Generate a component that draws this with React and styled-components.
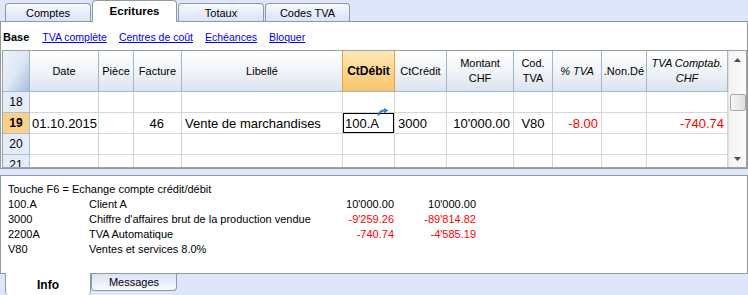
import React from 'react';
import styled, { createGlobalStyle } from 'styled-components';

const GlobalStyle = createGlobalStyle`
  * { box-sizing: border-box; }
  body {
    margin: 0;
    background: #dfe6fb;
    font-family: "Liberation Sans", Arial, sans-serif;
    font-size: 11px;
    color: #000;
  }
`;

const Page = styled.div`
  width: 748px;
  height: 295px;
  display: flex;
  flex-direction: column;
  overflow: hidden;
`;

const TabStrip = styled.div`
  height: 23px;
  margin-bottom: -1px;
  padding-left: 5px;
  display: flex;
  align-items: flex-end;
  gap: 1px;
  position: relative;
  z-index: 1;
`;

const Tab = styled.div`
  width: ${(p) => p.$w}px;
  height: ${(p) => (p.$active ? 22 : 18)}px;
  margin-bottom: ${(p) => (p.$active ? 0 : 1)}px;
  border: 1px solid #919b9c;
  border-bottom: none;
  border-radius: 4px 4px 0 0;
  background: ${(p) =>
    p.$active ? '#fff' : 'linear-gradient(to bottom, #fbfcfe 0%, #eaeefb 45%, #dce3f7 100%)'};
  font-weight: ${(p) => (p.$active ? 'bold' : 'normal')};
  font-size: ${(p) => (p.$active ? 11.5 : 11)}px;
  display: flex;
  align-items: center;
  justify-content: center;
  padding-bottom: ${(p) => (p.$active ? 2 : 0)}px;
`;

const Panel = styled.div`
  height: 148px;
  flex: none;
  background: #fff;
  border: 1px solid #919b9c;
  display: flex;
  flex-direction: column;
`;

const LinkBar = styled.div`
  height: 28px;
  flex: none;
  display: flex;
  align-items: center;
  padding: 2px 0 0 2px;
  gap: 12px;
`;

const Base = styled.span`
  font-weight: bold;
  font-size: 11px;
  margin-right: 1px;
`;

const Link = styled.a`
  color: #0000ff;
  font-size: 10.5px;
  text-decoration: underline;
  cursor: pointer;
`;

const Grid = styled.div`
  margin-left: 1px;
  width: 745px;
  height: 118px;
  flex: none;
  border: 1px solid #a0a0a0;
  display: flex;
`;

const Table = styled.div`
  width: 725px;
  height: 116px;
  overflow: hidden;
  display: flex;
  flex-direction: column;
`;

const HeadRow = styled.div`
  height: 41px;
  flex: none;
  display: flex;
  border-bottom: 1px solid #a6b8cf;
`;

const HeadCell = styled.div`
  flex: none;
  display: flex;
  align-items: center;
  justify-content: center;
  text-align: center;
  line-height: 15px;
  white-space: pre;
  overflow: hidden;
  border-right: 1px solid ${(p) => (p.$hot ? '#f0a035' : '#9fb6cf')};
  border-left: ${(p) => (p.$hot ? '1px solid #f0a035' : 'none')};
  margin-left: ${(p) => (p.$hot ? -1 : 0)}px;
  width: ${(p) => (p.$hot ? p.$w + 1 : p.$w)}px;
  font-weight: ${(p) => (p.$hot ? 'bold' : 'normal')};
  font-style: ${(p) => (p.$italic ? 'italic' : 'normal')};
  font-size: ${(p) => (p.$hot ? 12 : 11)}px;
  background: ${(p) =>
    p.$hot
      ? 'linear-gradient(to bottom, #fde9b6 0%, #fbd58c 55%, #f7c469 100%)'
      : 'linear-gradient(to bottom, #ffffff 0%, #f1f4f9 50%, #dbe3ee 100%)'};
`;

const Corner = styled.div`
  width: 27px;
  flex: none;
  border-right: 1px solid #9fb6cf;
  background: linear-gradient(to bottom right, #edf2fc 0%, #dfe8f7 50%, #a8bedb 100%);
`;

const Row = styled.div`
  height: 21px;
  flex: none;
  display: flex;
  border-bottom: 1px solid #d6d6d6;
`;

const NumCell = styled.div`
  width: 27px;
  flex: none;
  display: flex;
  align-items: center;
  justify-content: center;
  font-size: 12px;
  font-weight: ${(p) => (p.$on ? 'bold' : 'normal')};
  background: ${(p) => (p.$on ? '#fcd088' : '#e4ecf7')};
  border-right: 1px solid #a8bfd8;
  border-bottom: 1px solid #a8bfd8;
  margin-bottom: -1px;
`;

const Cell = styled.div`
  width: ${(p) => p.$w}px;
  flex: none;
  position: relative;
  display: flex;
  align-items: center;
  justify-content: ${(p) =>
    p.$align === 'right' ? 'flex-end' : p.$align === 'center' ? 'center' : 'flex-start'};
  padding: ${(p) => (p.$align === 'right' ? `0 ${p.$pad ?? 3}px 0 0` : `0 0 0 ${p.$pad ?? 3}px`)};
  font-size: 13px;
  color: ${(p) => (p.$red ? '#ff0000' : '#000')};
  white-space: nowrap;
  border-right: 1px solid #d6d6d6;
  box-shadow: ${(p) => (p.$sel ? 'inset 0 0 0 1px #000' : 'none')};
`;

const ArrowMark = styled.svg`
  position: absolute;
  right: 5px;
  top: -5px;
`;

const Scrollbar = styled.div`
  width: 18px;
  height: 116px;
  border-left: 1px solid #e2e2e2;
  background: linear-gradient(to right, #f4f4f4, #fbfbfb);
  display: flex;
  flex-direction: column;
  align-items: center;
`;

const ScrollBtn = styled.div`
  height: 17px;
  width: 100%;
  display: flex;
  align-items: center;
  justify-content: center;
`;

const Thumb = styled.div`
  margin-top: 26px;
  width: 16px;
  height: 17px;
  border: 1px solid #a9a9a9;
  border-radius: 2px;
  background: linear-gradient(to right, #f6f6f6, #dedede);
`;

const Spacer = styled.div`
  flex: 1;
`;

const InfoPanel = styled.div`
  margin-top: 6px;
  height: 99px;
  flex: none;
  background: #fff;
  border: 1px solid #919b9c;
  padding: 6px 0 0 7px;
  display: grid;
  grid-template-columns: 81px 225px 80px 82px;
  grid-auto-rows: 15px;
  align-content: start;
  line-height: 15px;
`;

const InfoWide = styled.div`
  grid-column: 1 / -1;
`;

const Amount = styled.div`
  text-align: right;
  color: ${(p) => (p.$red ? '#ff0000' : '#000')};
`;

const BottomStrip = styled.div`
  height: 22px;
  margin-top: -1px;
  padding-left: 5px;
  display: flex;
  align-items: flex-start;
  position: relative;
  z-index: 1;
`;

const BottomTab = styled.div`
  width: 86px;
  height: ${(p) => (p.$active ? 22 : 17)}px;
  margin-top: ${(p) => (p.$active ? 0 : 1)}px;
  border: 1px solid #919b9c;
  border-top: none;
  border-bottom: ${(p) => (p.$active ? 'none' : '1px solid #919b9c')};
  border-radius: 0 0 4px 4px;
  background: ${(p) =>
    p.$active ? '#fff' : 'linear-gradient(to bottom, #dce3f7 0%, #eaeefb 55%, #fbfcfe 100%)'};
  font-weight: ${(p) => (p.$active ? 'bold' : 'normal')};
  font-size: ${(p) => (p.$active ? 12 : 11)}px;
  display: flex;
  align-items: center;
  justify-content: center;
  padding-top: ${(p) => (p.$active ? 1 : 0)}px;
  padding-bottom: ${(p) => (p.$active ? 0 : 1)}px;
`;

const widths = [69, 35, 48, 161, 52, 52, 67, 39, 49, 45, 81];

const headers = [
  { label: 'Date' },
  { label: 'Pièce' },
  { label: 'Facture' },
  { label: 'Libellé' },
  { label: 'CtDébit', hot: true },
  { label: 'CtCrédit' },
  { label: 'Montant\nCHF' },
  { label: 'Cod.\nTVA' },
  { label: '% TVA', italic: true },
  { label: '.Non.Dé' },
  { label: 'TVA Comptab.\nCHF', italic: true },
];

const rowCells = [
  { text: '01.10.2015', align: 'left', pad: 2 },
  { text: '' },
  { text: '46', align: 'right', pad: 17 },
  { text: 'Vente de marchandises', align: 'left', pad: 3 },
  { text: '100.A', align: 'left', pad: 2, sel: true },
  { text: '3000', align: 'left', pad: 3 },
  { text: "10'000.00", align: 'right' },
  { text: 'V80', align: 'center', pad: 0 },
  { text: '-8.00', align: 'right', red: true },
  { text: '' },
  { text: '-740.74', align: 'right', red: true },
];

const info = [
  ['100.A', 'Client A', "10'000.00", "10'000.00", false],
  ['3000', "Chiffre d'affaires brut de la production vendue", "-9'259.26", "-89'814.82", true],
  ['2200A', 'TVA Automatique', '-740.74', "-4'585.19", true],
  ['V80', 'Ventes et services 8.0%', '', '', false],
];

const EmptyRow = ({ n }) => (
  <Row>
    <NumCell>{n}</NumCell>
    {widths.map((w, i) => (
      <Cell key={i} $w={w} />
    ))}
  </Row>
);

const App = () => (
  <>
    <GlobalStyle />
    <Page>
      <TabStrip>
        <Tab $w={86}>Comptes</Tab>
        <Tab $w={85} $active>Ecritures</Tab>
        <Tab $w={86}>Totaux</Tab>
        <Tab $w={85}>Codes TVA</Tab>
      </TabStrip>

      <Panel>
        <LinkBar>
          <Base>Base</Base>
          <Link>TVA complète</Link>
          <Link>Centres de coût</Link>
          <Link>Echéances</Link>
          <Link>Bloquer</Link>
        </LinkBar>

        <Grid>
          <Table>
            <HeadRow>
              <Corner />
              {headers.map((h, i) => (
                <HeadCell key={i} $w={widths[i]} $hot={h.hot} $italic={h.italic}>
                  {h.label}
                </HeadCell>
              ))}
            </HeadRow>
            <EmptyRow n="18" />
            <Row>
              <NumCell $on>19</NumCell>
              {rowCells.map((c, i) => (
                <Cell
                  key={i}
                  $w={widths[i]}
                  $align={c.align}
                  $pad={c.pad}
                  $red={c.red}
                  $sel={c.sel}
                >
                  {c.text}
                  {c.sel && (
                    <ArrowMark width="12" height="8" viewBox="0 0 12 8">
                      <path d="M1.5 7.5 Q2.5 2.5 7.5 2.5" fill="none" stroke="#2b7bd0" strokeWidth="2" />
                      <polygon points="7,0 11.5,2.6 7,5.2" fill="#2b7bd0" />
                    </ArrowMark>
                  )}
                </Cell>
              ))}
            </Row>
            <EmptyRow n="20" />
            <EmptyRow n="21" />
          </Table>
          <Scrollbar>
            <ScrollBtn>
              <svg width="7" height="4" viewBox="0 0 7 4">
                <polygon points="0,4 3.5,0 7,4" fill="#4d4d4d" />
              </svg>
            </ScrollBtn>
            <Thumb />
            <Spacer />
            <ScrollBtn>
              <svg width="7" height="4" viewBox="0 0 7 4">
                <polygon points="0,0 7,0 3.5,4" fill="#4d4d4d" />
              </svg>
            </ScrollBtn>
          </Scrollbar>
        </Grid>
      </Panel>

      <InfoPanel>
        <InfoWide>Touche F6 = Echange compte crédit/débit</InfoWide>
        {info.map(([code, label, a, b, red]) => (
          <React.Fragment key={code}>
            <div>{code}</div>
            <div>{label}</div>
            <Amount $red={red}>{a}</Amount>
            <Amount $red={red}>{b}</Amount>
          </React.Fragment>
        ))}
      </InfoPanel>

      <BottomStrip>
        <BottomTab $active>Info</BottomTab>
        <BottomTab>Messages</BottomTab>
      </BottomStrip>
    </Page>
  </>
);

export default App;
